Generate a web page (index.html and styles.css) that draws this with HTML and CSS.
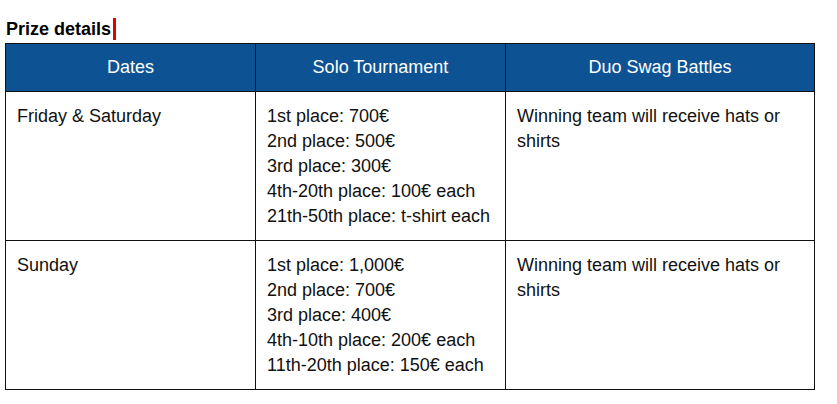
FILE: index.html
```html
<!DOCTYPE html>
<html>
<head>
<meta charset="utf-8">
<link rel="stylesheet" href="styles.css">
</head>
<body>
<div class="wrap">
  <h3 class="title">Prize details<span class="caret"></span></h3>
  <table class="prizes">
    <colgroup>
      <col class="c1"><col class="c2"><col class="c3">
    </colgroup>
    <thead>
      <tr><th>Dates</th><th>Solo Tournament</th><th>Duo Swag Battles</th></tr>
    </thead>
    <tbody>
      <tr>
        <td>Friday &amp; Saturday</td>
        <td>1st place: 700€<br>2nd place: 500€<br>3rd place: 300€<br>4th-20th place: 100€ each<br>21th-50th place: t-shirt each</td>
        <td>Winning team will receive hats or shirts</td>
      </tr>
      <tr>
        <td>Sunday</td>
        <td>1st place: 1,000€<br>2nd place: 700€<br>3rd place: 400€<br>4th-10th place: 200€ each<br>11th-20th place: 150€ each</td>
        <td>Winning team will receive hats or shirts</td>
      </tr>
    </tbody>
  </table>
</div>
</body>
</html>
```
FILE: styles.css
```css
html, body { margin: 0; padding: 0; background: #fff; }
body { font-family: "Liberation Sans", Arial, sans-serif; color: #111; }
.wrap { padding: 0 5px; }
.title {
  margin: 18px 0 3px 1px;
  font-size: 18px;
  line-height: 22px;
  font-weight: bold;
  color: #000;
  display: flex;
  align-items: center;
}
.caret {
  display: inline-block;
  width: 3px;
  height: 22px;
  background: #e00000;
  margin-left: 2px;
}
.prizes {
  border-collapse: collapse;
  width: 809px;
  table-layout: fixed;
  font-size: 18px;
  line-height: 25px;
}
.c1 { width: 250px; }
.c2 { width: 250px; }
.c3 { width: 309px; }
.prizes th, .prizes td { border: 1px solid #111; }
.prizes th {
  background: #0d5393;
  color: #fff;
  font-weight: normal;
  padding: 11px 11px;
  text-align: center;
}
.prizes td {
  padding: 12px 11px 11px;
  vertical-align: top;
  text-align: left;
}
```
